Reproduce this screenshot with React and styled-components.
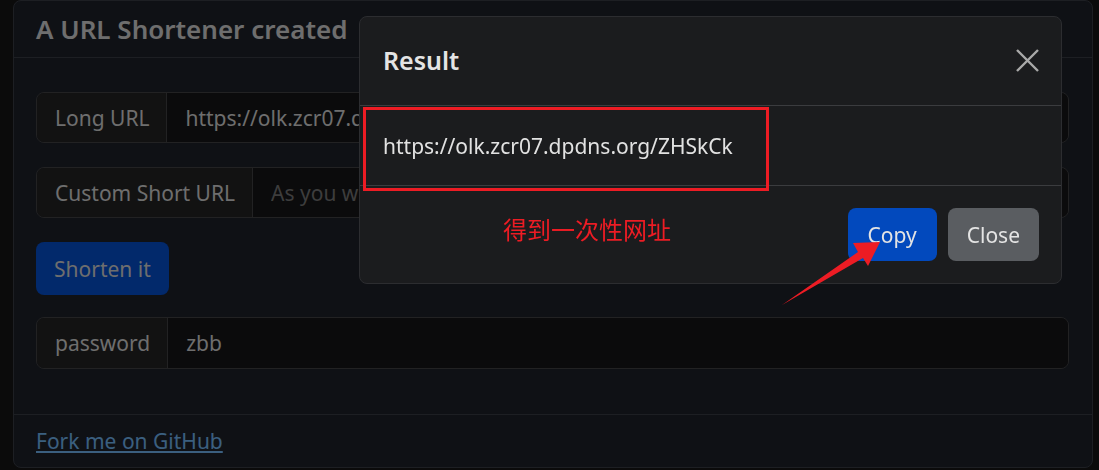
import React from "react";
import styled, { createGlobalStyle } from "styled-components";

const GlobalStyle = createGlobalStyle`
  body {
    margin: 0;
    background-color: #161617;
    font-family: "Noto Sans", "Open Sans", "Liberation Sans", sans-serif;
    overflow: hidden;
  }
`;

const Page = styled.div`
  width: 1099px;
  height: 470px;
  padding: 0 6px 0 13px;
  box-sizing: border-box;
`;

const Card = styled.div`
  width: 1080px;
  height: 468px;
  box-sizing: border-box;
  background-color: #1f232b;
  border: 1px solid #3a3e47;
  border-radius: 8px;
  display: flex;
  flex-direction: column;
`;

const CardHeader = styled.div`
  height: 57px;
  box-sizing: border-box;
  padding: 0 22px 1px;
  display: flex;
  align-items: center;
  border-bottom: 1px solid #3a3e47;
  h4 {
    margin: 0;
    font-size: 26px;
    font-weight: 600;
    color: #dcdcdc;
  }
`;

const CardBody = styled.div`
  flex: 1;
  padding: 34px 23px 0 22px;
  display: flex;
  flex-direction: column;
  align-items: flex-start;
  gap: 24px;
`;

const InputGroup = styled.div`
  width: 100%;
  height: ${(p) => p.h || 51}px;
  display: flex;
  box-sizing: border-box;
  border: 1px solid #444446;
  border-radius: 8px;
  overflow: hidden;
  margin-top: ${(p) => p.mt || 0}px;
`;

const GroupLabel = styled.span`
  display: flex;
  align-items: center;
  padding: 0 17px 0 18px;
  background-color: #242425;
  border-right: 1px solid #444446;
  color: #dcdcdc;
  font-size: 21px;
`;

const Field = styled.input`
  flex: 1;
  border: 0;
  outline: none;
  padding: 0 18px;
  background-color: #161618;
  color: #dcdcdc;
  font-family: inherit;
  font-size: 21px;
  &::placeholder {
    color: #7a7a7a;
  }
`;

const Button = styled.button`
  height: 53px;
  padding: 0 ${(p) => p.px || 18}px;
  border: 0;
  border-radius: 8px;
  font-family: inherit;
  font-size: 21px;
  color: ${(p) => p.fg || "#dcdcdc"};
  background-color: ${(p) => p.bg};
`;

const CardFooter = styled.div`
  height: 53px;
  box-sizing: border-box;
  padding: 0 22px;
  display: flex;
  align-items: center;
  border-top: 1px solid #3a3e47;
  a {
    color: #76bffe;
    font-size: 21px;
    text-decoration: underline;
  }
`;

const Backdrop = styled.div`
  position: fixed;
  inset: 0;
  background-color: rgba(0, 0, 0, 0.5);
`;

const Modal = styled.div`
  position: fixed;
  left: 359px;
  top: 16px;
  width: 703px;
  height: 268px;
  box-sizing: border-box;
  background-color: #1b1c1e;
  border: 1px solid #2c2d30;
  border-radius: 8px;
  display: flex;
  flex-direction: column;
`;

const ModalHeader = styled.div`
  height: 89px;
  box-sizing: border-box;
  padding: 0 22px 0 23px;
  display: flex;
  align-items: center;
  justify-content: space-between;
  border-bottom: 1px solid #3b3c3f;
  h5 {
    margin: 0 0 2px;
    font-size: 25px;
    font-weight: 600;
    color: #e4e4e4;
  }
`;

const CloseX = styled.svg`
  width: 23px;
  height: 23px;
  margin-top: -2px;
`;

const ModalBody = styled.div`
  height: 80px;
  box-sizing: border-box;
  padding: 0 23px;
  display: flex;
  align-items: center;
  border-bottom: 1px solid #3b3c3f;
  color: #e2e2e2;
  font-size: 21px;
`;

const ModalFooter = styled.div`
  flex: 1;
  padding: 22px 22px 0 0;
  display: flex;
  justify-content: flex-end;
  align-items: flex-start;
  gap: 11px;
`;

const Note = styled.span`
  position: absolute;
  left: 143px;
  top: 197px;
  color: #ed1c24;
  font-family: "Noto Sans CJK SC", sans-serif;
  font-size: 24px;
  line-height: 30px;
`;

const RedBox = styled.div`
  position: absolute;
  left: 3px;
  top: 90px;
  width: 406px;
  height: 84px;
  box-sizing: border-box;
  border: 3px solid #ed1c24;
`;

const Arrow = styled.svg`
  position: fixed;
  left: 0;
  top: 0;
  width: 1099px;
  height: 470px;
  pointer-events: none;
`;

export default function App() {
  return (
    <>
      <GlobalStyle />
      <Page>
        <Card>
          <CardHeader>
            <h4>A URL Shortener created</h4>
          </CardHeader>
          <CardBody>
            <InputGroup>
              <GroupLabel>Long URL</GroupLabel>
              <Field defaultValue="https://olk.zcr07.dpdns.org/a-very-long-url" />
            </InputGroup>
            <InputGroup>
              <GroupLabel>Custom Short URL</GroupLabel>
              <Field placeholder="As you wish" />
            </InputGroup>
            <Button bg="#0452d6" px={18}>Shorten it</Button>
            <InputGroup h={52} mt={-2}>
              <GroupLabel>password</GroupLabel>
              <Field defaultValue="zbb" />
            </InputGroup>
          </CardBody>
          <CardFooter>
            <a href="#">Fork me on GitHub</a>
          </CardFooter>
        </Card>
      </Page>
      <Backdrop />
      <Modal>
        <ModalHeader>
          <h5>Result</h5>
          <CloseX viewBox="0 0 23 23">
            <path d="M1 1L22 22M22 1L1 22" stroke="#a9a9a9" strokeWidth="2.4" />
          </CloseX>
        </ModalHeader>
        <ModalBody>https://olk.zcr07.dpdns.org/ZHSkCk</ModalBody>
        <ModalFooter>
          <Button bg="#0249bd" fg="#e4e4e4" px={20}>Copy</Button>
          <Button bg="#5a5d61" fg="#e4e4e4" px={19}>Close</Button>
        </ModalFooter>
        <Note>得到一次性网址</Note>
        <RedBox />
      </Modal>
      <Arrow viewBox="0 0 1099 470">
        <polygon
          points="782,305 858,252 853,243 880,242 868,266 863,258"
          fill="#ed1c24"
        />
      </Arrow>
    </>
  );
}
